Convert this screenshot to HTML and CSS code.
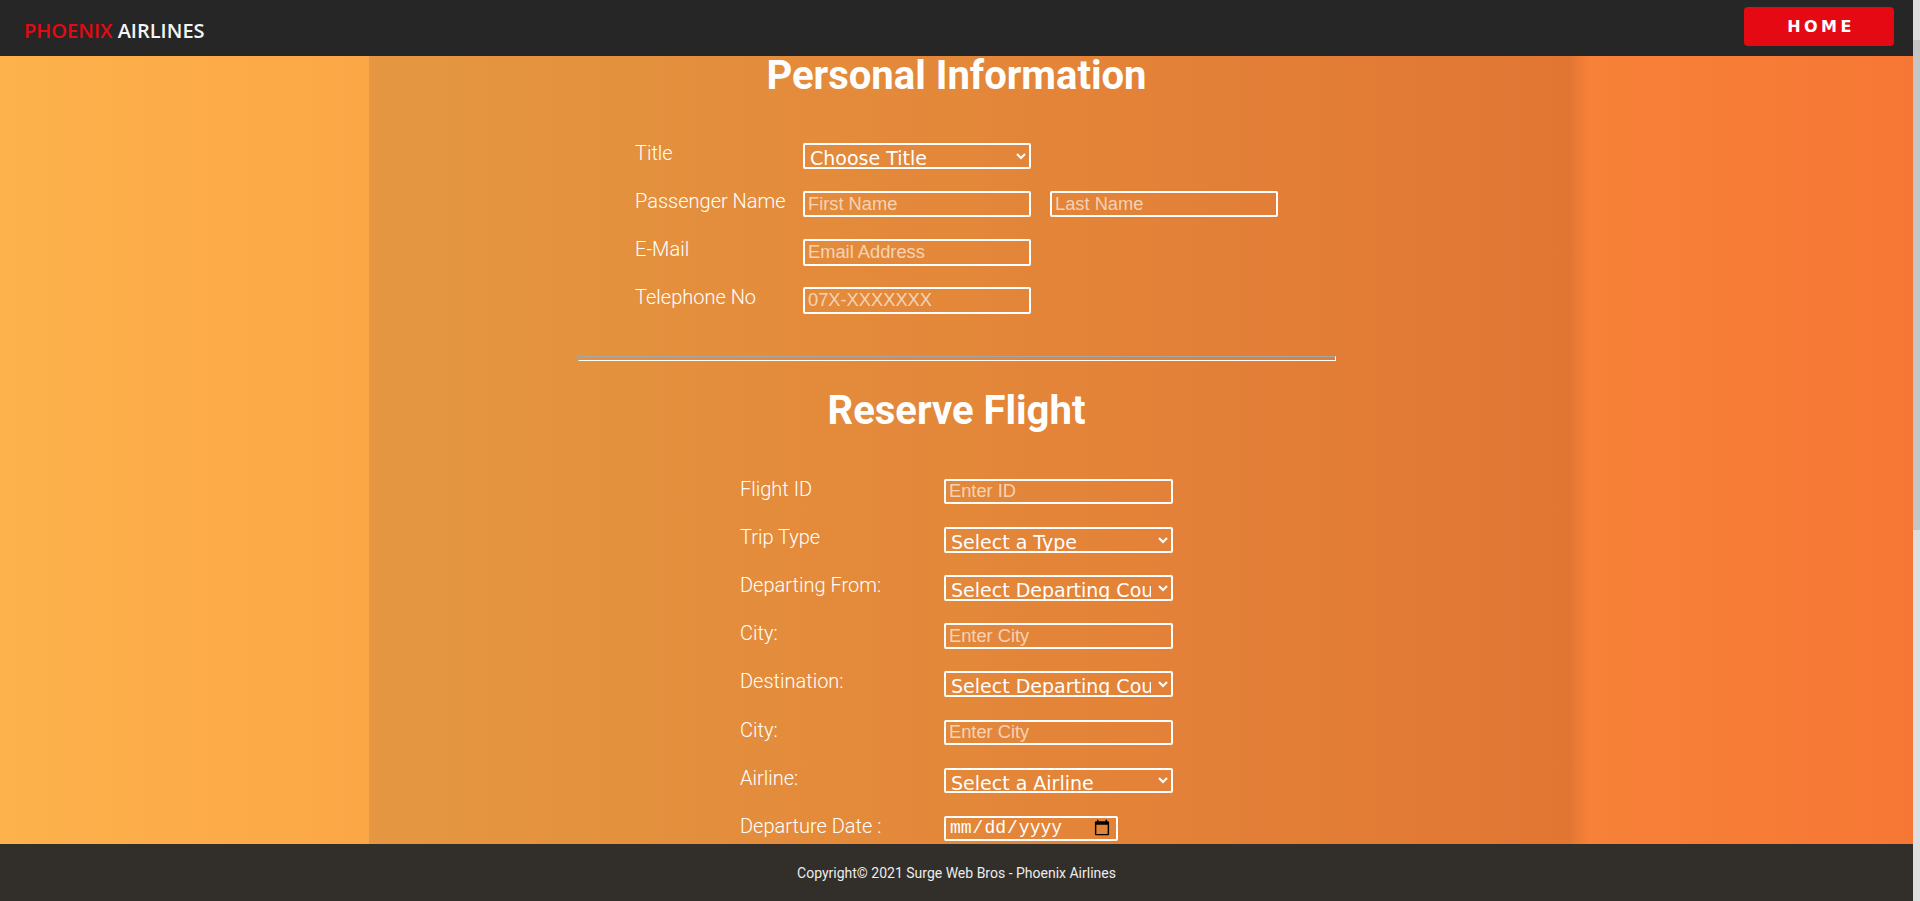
FILE: index.html
```html
<!DOCTYPE html>
<html lang="en">
<head>
<meta charset="utf-8">
<title>Phoenix Airlines - Reserve Flight</title>
<link rel="stylesheet" href="styles.css">
</head>
<body>
<header class="navbar">
  <a class="brand" href="#"><span class="brand-red">PHOENIX</span> AIRLINES</a>
  <a class="home-btn" href="#">HOME</a>
</header>

<main class="booking">
  <h1 class="section-title">Personal Information</h1>
  <form class="form-grid personal">
    <label class="field-label">Title</label>
    <select class="field field-select">
      <option>Choose Title</option>
      <option>Mr.</option>
      <option>Mrs.</option>
      <option>Miss</option>
    </select>

    <label class="field-label">Passenger Name</label>
    <input class="field" type="text" placeholder="First Name">
    <input class="field field-last" type="text" placeholder="Last Name">

    <label class="field-label">E-Mail</label>
    <input class="field" type="email" placeholder="Email Address">

    <label class="field-label">Telephone No</label>
    <input class="field" type="tel" placeholder="07X-XXXXXXX">
  </form>

  <hr class="divider">

  <h1 class="section-title reserve-title">Reserve Flight</h1>
  <form class="form-grid reserve">
    <label class="field-label">Flight ID</label>
    <input class="field" type="text" placeholder="Enter ID">

    <label class="field-label">Trip Type</label>
    <select class="field field-select">
      <option>Select a Type</option>
      <option>One Way</option>
      <option>Round Trip</option>
    </select>

    <label class="field-label">Departing From:</label>
    <select class="field field-select">
      <option>Select Departing Country</option>
    </select>

    <label class="field-label">City:</label>
    <input class="field" type="text" placeholder="Enter City">

    <label class="field-label">Destination:</label>
    <select class="field field-select">
      <option>Select Departing Country</option>
    </select>

    <label class="field-label">City:</label>
    <input class="field" type="text" placeholder="Enter City">

    <label class="field-label">Airline:</label>
    <select class="field field-select">
      <option>Select a Airline</option>
    </select>

    <label class="field-label">Departure Date :</label>
    <input class="field field-date" type="date">

    <label class="field-label">Departure Time :</label>
    <input class="field field-date" type="time">

    <label class="field-label">Return Date :</label>
    <input class="field field-date" type="date">

    <label class="field-label">Passengers :</label>
    <input class="field" type="number" placeholder="No. of Passengers">

    <label class="field-label">Class :</label>
    <select class="field field-select">
      <option>Select a Class</option>
    </select>
  </form>
  <button class="submit-btn" type="button">RESERVE</button>
</main>

<footer class="site-footer">Copyright© 2021 Surge Web Bros - Phoenix Airlines</footer>

<div class="scroll-track" aria-hidden="true"><div class="scroll-thumb"></div></div>
</body>
</html>
```

FILE: styles.css
```css
* {
  box-sizing: border-box;
}

html,
body {
  margin: 0;
}

body {
  min-height: 100vh;
  padding: 0 7px 140px 0;
  font-family: Roboto, "Liberation Sans", sans-serif;
  color: #fff;
  background:
    linear-gradient(rgba(0, 0, 0, 0.09), rgba(0, 0, 0, 0.09)) 369px 0 / 1203px 100% no-repeat fixed,
    linear-gradient(to right, rgba(0, 0, 0, 0.07), rgba(0, 0, 0, 0)) 1572px 0 / 18px 100% no-repeat fixed,
    linear-gradient(to right, #fdb24b, #f67734) fixed;
}

::-webkit-scrollbar {
  width: 0;
}

/* page scrollbar as it appears in the capture */
.scroll-track {
  position: fixed;
  top: 0;
  right: 0;
  bottom: 0;
  width: 7px;
  background: #dedede;
  z-index: 10;
}

.scroll-thumb {
  margin-top: 40px;
  height: 490px;
  background: #c5c5c5;
}

/* ---------- navbar ---------- */
.navbar {
  height: 56px;
  background: #262626;
  display: flex;
  justify-content: space-between;
  align-items: flex-start;
}

.brand {
  margin: 17px 0 0 24px;
  font-family: "Open Sans", sans-serif;
  font-weight: 600;
  font-size: 20px;
  line-height: normal;
  color: #f4f4f4;
  text-decoration: none;
}

.brand-red {
  color: #e50914;
}

.home-btn {
  margin: 7px 19px 0 0;
  width: 150px;
  height: 39px;
  display: flex;
  align-items: center;
  justify-content: center;
  padding-left: 4px;
  background: #e50914;
  border-radius: 4px;
  color: #fff;
  text-decoration: none;
  font-family: "DejaVu Sans", Verdana, sans-serif;
  font-weight: 700;
  font-size: 16px;
  letter-spacing: 3.4px;
}

/* ---------- main ---------- */
.booking {
  display: flex;
  flex-direction: column;
  align-items: center;
}

.section-title {
  margin: 0;
  font-family: Roboto, sans-serif;
  font-weight: 700;
  font-size: 40px;
  line-height: 40px;
  text-align: center;
  color: #fff;
}

.reserve-title {
  margin-top: 30.35px;
}

.form-grid {
  display: grid;
  align-items: start;
  margin: 0;
}

.personal {
  grid-template-columns: 168px 228px 19px 228px;
  row-gap: 21.5px;
  margin-top: 46.5px;
}

.reserve {
  grid-template-columns: 204px 229px;
  row-gap: 22.5px;
  margin-top: 47.35px;
}

.field-label {
  grid-column: 1;
  font-family: Roboto, sans-serif;
  font-weight: 300;
  font-size: 20px;
  line-height: 20px;
  color: #fff;
}

.field {
  width: 100%;
  margin: 0;
  padding: 0 3px;
  border: 2px solid #fff;
  border-radius: 2px;
  background: transparent;
  color: #fff;
  font-family: "Liberation Sans", Arial, sans-serif;
  font-size: 18.3px;
  outline: none;
}

.personal .field {
  height: 26.7px;
}

.reserve .field {
  height: 25.7px;
}

.field::placeholder {
  color: rgba(255, 255, 255, 0.64);
}

.field-select {
  padding: 1px 4px 0 1px;
  font-family: "DejaVu Sans", sans-serif;
  font-size: 19px;
}

.field-select option {
  color: #222;
}

.field-last {
  grid-column: 4;
}

.reserve .field-date {
  width: 174px;
  height: 25px;
  font-family: "Liberation Mono", monospace;
  font-size: 18px;
}

.divider {
  width: 758px;
  height: 5px;
  margin: 42.2px 0 0;
  border-style: solid;
  border-width: 1px;
  border-color: #a3a7a9 #fff #fff #a3a7a9;
}

.submit-btn {
  margin-top: 40px;
  width: 200px;
  height: 40px;
  border: none;
  border-radius: 4px;
  background: #e50914;
  color: #fff;
  font-family: Roboto, sans-serif;
  font-weight: 700;
  font-size: 16px;
  letter-spacing: 3px;
}

/* ---------- footer ---------- */
.site-footer {
  position: fixed;
  left: 0;
  right: 0;
  bottom: 0;
  height: 57px;
  display: flex;
  align-items: center;
  justify-content: center;
  padding-right: 7px;
  background: #322f2b;
  color: #ececec;
  font-family: Roboto, sans-serif;
  font-size: 14px;
}
```
